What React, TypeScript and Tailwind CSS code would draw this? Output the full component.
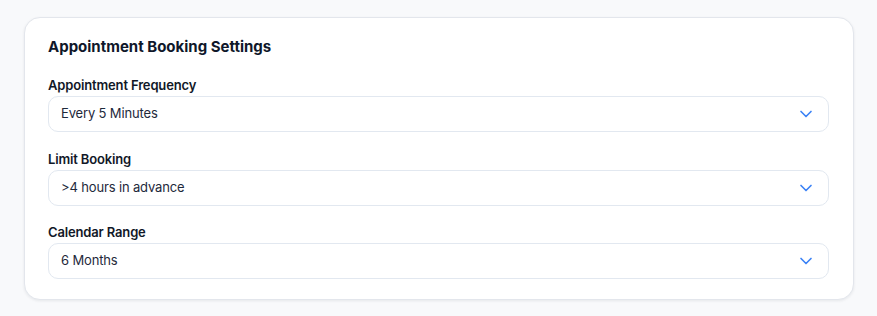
import React from 'react';
import { ChevronDown } from 'lucide-react';

const fields = [
  { label: 'Appointment Frequency', value: 'Every 5 Minutes' },
  { label: 'Limit Booking', value: '>4 hours in advance' },
  { label: 'Calendar Range', value: '6 Months' },
];

export default function App() {
  return (
    <div className="min-h-[316px] bg-[#f8f9fb] pl-6 pr-[23px] pt-[17px] pb-4 font-['Inter',sans-serif]">
      <div className="rounded-2xl border border-[#e3e6ec] bg-white pl-[23px] pr-6 pt-[19px] pb-5 shadow-[0_1px_3px_rgba(15,23,42,0.08)]">
        <h2 className="text-[15px] leading-5 font-bold text-[#0f172a]">Appointment Booking Settings</h2>
        <div className="mt-5 flex flex-col gap-[18.5px]">
          {fields.map(f => (
            <div key={f.label}>
              <label className="block text-[13px] leading-4 font-semibold tracking-[-0.15px] text-[#111827]">{f.label}</label>
              <div className="mt-[3px] flex h-[36px] items-center justify-between rounded-[10px] border border-[#e2e8f0] bg-white pl-3 pr-3">
                <span className="text-[13px] tracking-[-0.15px] text-[#1e293b]">{f.value}</span>
                <ChevronDown size={20} strokeWidth={2} className="text-[#3b82f6]" />
              </div>
            </div>
          ))}
        </div>
      </div>
    </div>
  );
}
